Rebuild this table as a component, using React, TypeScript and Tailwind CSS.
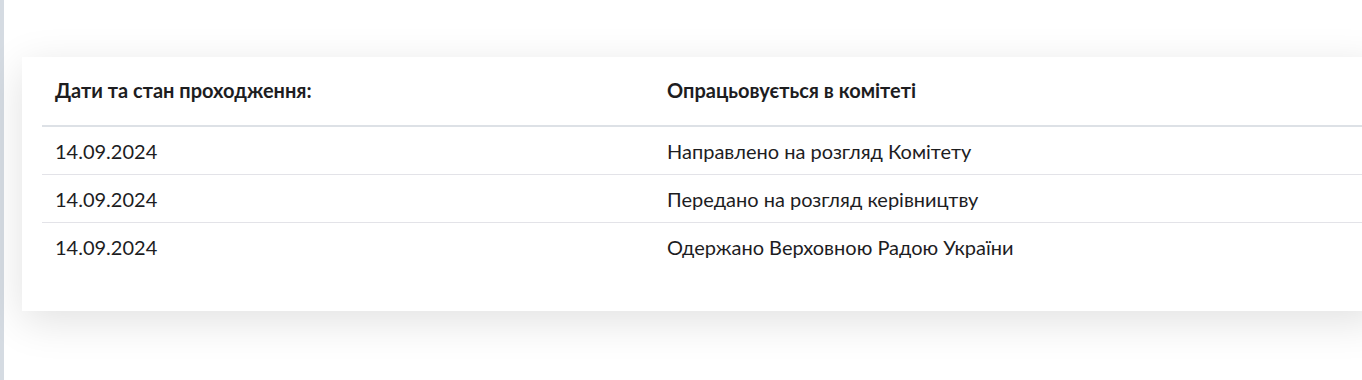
const rows = [
  { date: '14.09.2024', text: 'Направлено на розгляд Комітету' },
  { date: '14.09.2024', text: 'Передано на розгляд керівництву' },
  { date: '14.09.2024', text: 'Одержано Верховною Радою України' },
]

export default function App() {
  return (
    <div
      className="flex h-[380px] w-[1362px] overflow-hidden bg-white text-[#1d1d1f]"
      style={{ fontFamily: 'Lato, "Noto Sans", sans-serif' }}
    >
      <div className="w-[4px] shrink-0 bg-[#d5dbe2]" />
      <div className="flex-1 pt-[57px] pl-[18px]">
        <div className="-mr-[20px] h-[254px] bg-white pl-[20px] pb-[40px] shadow-[0_10px_40px_rgba(0,0,0,0.12)]">
          <div className="flex h-[70px] items-center border-b-2 border-[#dde1e6] pb-[3px] text-[20px] font-bold">
            <div className="w-[625px] pl-[13px]">Дати та стан проходження:</div>
            <div>Опрацьовується в комітеті</div>
          </div>
          {rows.map((r, i) => (
            <div
              key={i}
              className={
                i < rows.length - 1
                  ? 'flex h-[48px] items-center border-b border-[#e3e3e8] text-[20px]'
                  : 'flex h-[48px] items-center text-[20px]'
              }
            >
              <div className="w-[625px] pl-[13px]">{r.date}</div>
              <div>{r.text}</div>
            </div>
          ))}
        </div>
      </div>
    </div>
  )
}
